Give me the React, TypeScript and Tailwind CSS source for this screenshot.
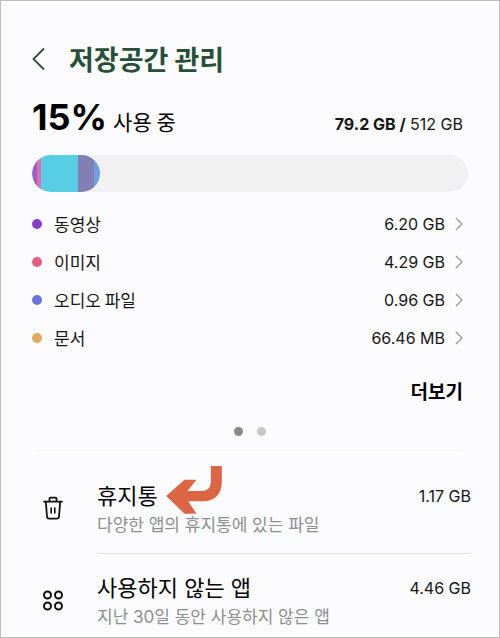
import React from "react";

interface Category {
  name: string;
  size: string;
  dot: string;
}

const categories: Category[] = [
  { name: "동영상", size: "6.20 GB", dot: "bg-[#863fc4]" },
  { name: "이미지", size: "4.29 GB", dot: "bg-[#e55c83]" },
  { name: "오디오 파일", size: "0.96 GB", dot: "bg-[#6b74dc]" },
  { name: "문서", size: "66.46 MB", dot: "bg-[#dfab5c]" },
];

const segments = [
  { color: "bg-[#9d5dcb]", grow: 5 },
  { color: "bg-[#d673ae]", grow: 4 },
  { color: "bg-[#58cde6]", grow: 37 },
  { color: "bg-[#8280b2]", grow: 15 },
  { color: "bg-[#6c9fe5]", grow: 6 },
];

const TrashIcon = () => (
  <svg width="22" height="26" viewBox="0 0 22 26" fill="none" stroke="#111" strokeWidth="1.8" strokeLinejoin="round" strokeLinecap="round" aria-hidden="true">
    <path d="M2 5.6h18M7.5 5.2V2.6c0-.5.4-.9.9-.9h5.2c.5 0 .9.4.9.9v2.600M3.800 5.600l1.200 14.900c.1 1.300 1 2.200 2.300 2.200h7.400c1.300 0 2.200-.9 2.300-2.200l1.200-14.900" />
    <path d="M9.2 12v5M12.8 12v5" strokeWidth="1.6" />
  </svg>
);

const AppsIcon = () => (
  <svg width="22" height="22" viewBox="0 0 22 22" fill="none" stroke="#111" strokeWidth="2" aria-hidden="true">
    <circle cx="5.5" cy="5" r="3.5" />
    <circle cx="16.5" cy="5" r="3.5" />
    <circle cx="5.5" cy="16" r="3.5" />
    <circle cx="16.5" cy="16" r="3.5" />
  </svg>
);

const ArrowMark = () => (
  <svg className="absolute -top-4 left-full ml-2 h-12 w-14" viewBox="20 18 167 144" fill="#dc6544" aria-hidden="true">
    <path d="M154 18H187V66C187 102 165 124 130 124H86L111 161H75L20 108L75 59H111L84 93H126C145 93 154 84 154 64Z" />
  </svg>
);

const items = [
  { title: "휴지통", desc: "다양한 앱의 휴지통에 있는 파일", size: "1.17 GB", icon: <TrashIcon />, marked: true },
  { title: "사용하지 않는 앱", desc: "지난 30일 동안 사용하지 않은 앱", size: "4.46 GB", icon: <AppsIcon />, marked: false },
];

const App: React.FC = () => (
  <main className="min-h-screen border border-[#bdbdbd] bg-[#fcfcfe] pt-9 text-[#151515] font-['Inter','Noto_Sans_CJK_KR',sans-serif]">
    <header className="flex h-11 items-center gap-6 px-[31px]">
      <button aria-label="뒤로">
        <svg width="13" height="24" viewBox="0 0 13 24" fill="none" stroke="#285039" strokeWidth="1.8" aria-hidden="true">
          <path d="M12 1.5L1.5 12L12 22.5" />
        </svg>
      </button>
      <h1 className="font-['Noto_Sans_CJK_KR',sans-serif] text-[27px] leading-9 font-bold text-[#285039]">저장공간 관리</h1>
    </header>

    <section>
      <div className="mt-4 flex h-11 items-baseline justify-between pr-9 pl-[31px]">
        <p className="flex items-baseline gap-1.5 text-black">
          <span className="text-4xl font-bold">15%</span>
          <span className="font-['Noto_Sans_CJK_KR',sans-serif] text-[21px]">사용 중</span>
        </p>
        <p className="text-base">
          <b>79.2 GB /</b> 512 GB
        </p>
      </div>

      <div className="mx-[31px] mt-3.5 h-[37px] overflow-hidden rounded-full bg-[#f1f1f1]">
        <div className="flex h-full w-[15.5%] overflow-hidden rounded-full">
          {segments.map((s) => (
            <div key={s.color} className={s.color} style={{ flexGrow: s.grow }} />
          ))}
        </div>
      </div>

      <ul className="mt-[13px] pr-9 pl-[31px]">
        {categories.map((c) => (
          <li key={c.name}>
            <button className="flex h-[38px] w-full items-center text-[17px]">
              <span className={`mr-3 size-2.5 rounded-full ${c.dot}`} />
              <span className="font-['Noto_Sans_CJK_KR',sans-serif]">{c.name}</span>
              <span className="ml-auto text-base">{c.size}</span>
              <svg className="ml-2.5" width="8" height="14" viewBox="0 0 8 14" fill="none" stroke="#999" strokeWidth="1.3" aria-hidden="true">
                <path d="M1 1L7 7L1 13" />
              </svg>
            </button>
          </li>
        ))}
      </ul>

      <div className="mt-[18px] flex justify-end pr-9">
        <button className="h-8 font-['Noto_Sans_CJK_KR',sans-serif] text-[19px] font-bold text-black">더보기</button>
      </div>
      <div className="mt-5 flex justify-center gap-3.5">
        <span className="size-[9px] rounded-full bg-[#8a8a8c]" />
        <span className="size-[9px] rounded-full bg-[#c8c8ca]" />
      </div>
    </section>

    <hr className="mx-9 mt-3.5 border-[#f5f5f7]" />

    <ul className="mt-[11px]">
      {items.map((item) => (
        <li key={item.title} className="group flex pt-5 pr-7 pl-10">
          <div className="mr-8 flex h-[54px] w-6 shrink-0 items-center justify-center">{item.icon}</div>
          <div className="grow border-b border-[#dedee1] pb-4 group-last:border-0 group-last:pb-2">
            <div className="flex items-center justify-between">
              <h2 className="relative text-[22px] leading-7 text-black">
                {item.title}
                {item.marked && <ArrowMark />}
              </h2>
              <span className="text-base">{item.size}</span>
            </div>
            <p className="mt-[3px] text-[17px] leading-6 text-[#8e8e91]">{item.desc}</p>
          </div>
        </li>
      ))}
    </ul>
  </main>
);

export default App;
